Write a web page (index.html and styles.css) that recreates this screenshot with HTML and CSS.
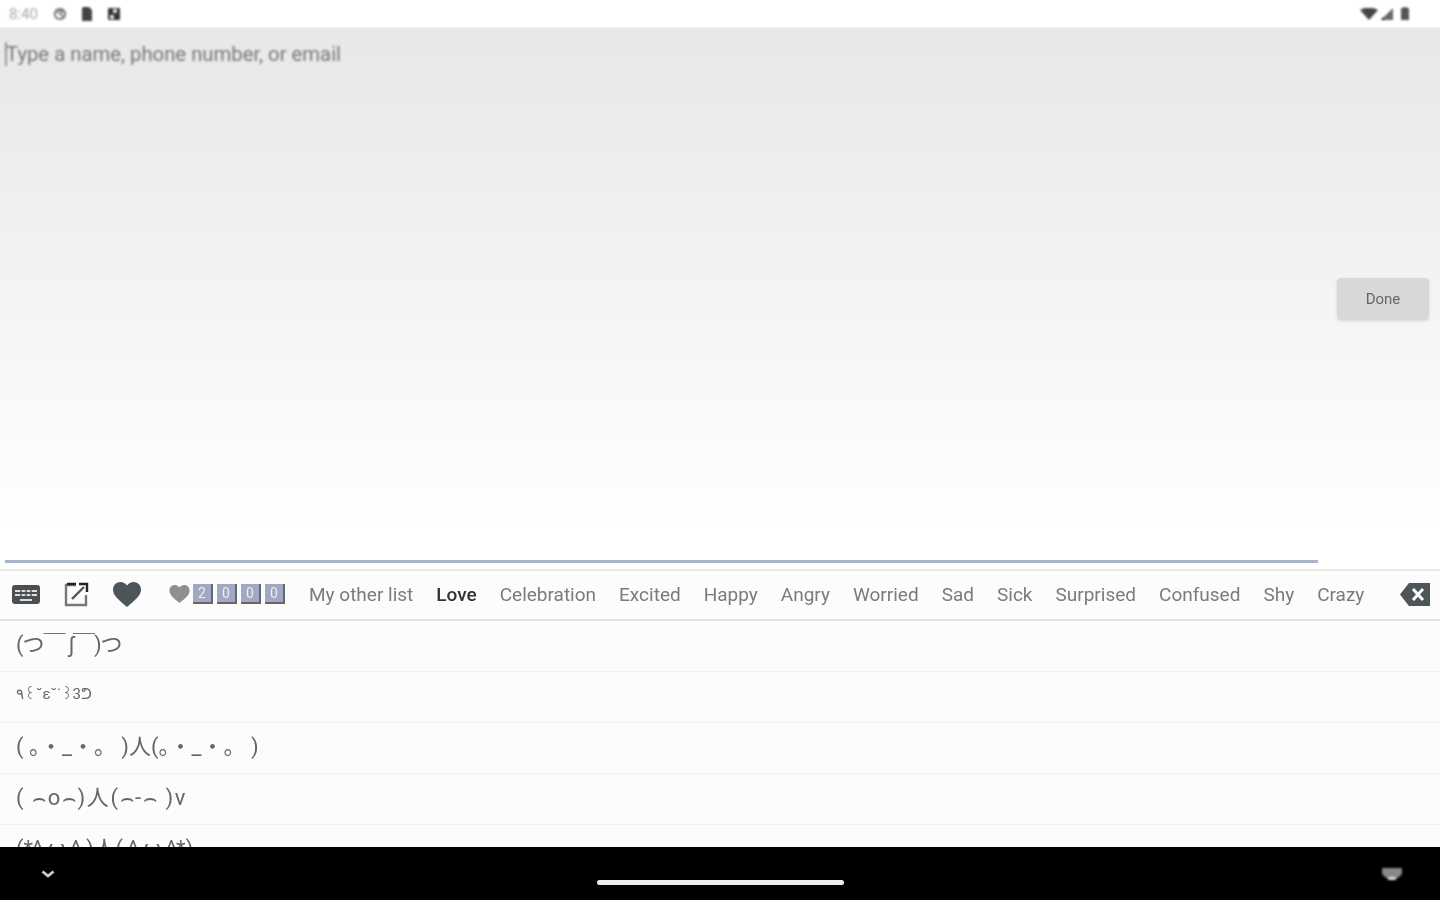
FILE: index.html
```html
<!DOCTYPE html>
<html>
<head>
  <meta charset="utf-8">
  <title>Kaomoji keyboard</title>
  <link rel="stylesheet" href="styles.css">
</head>
<body>
  <div class="status-bar">
    <div class="status-left">
      <span class="time">8:40</span>
      <svg class="st-icon" viewBox="0 0 14 14"><circle cx="7" cy="7" r="5.200" fill="none" stroke="#666" stroke-width="1.800"/><path d="M3 3l8 8M6 4h3v3" fill="none" stroke="#666" stroke-width="1.300"/></svg>
      <svg class="st-icon" viewBox="0 0 14 14"><path d="M3 0h6l3 3v11H2V1z" fill="#444"/></svg>
      <svg class="st-icon" viewBox="0 0 14 14"><rect x="1" y="1" width="12" height="12" rx="1" fill="#333"/><path d="M6 2h4v4H6zM3 8h4v4H3z" fill="#ddd"/></svg>
    </div>
    <div class="status-right">
      <svg class="wifi" viewBox="0 0 18 12"><path d="M0 2q9-5 18 0l-9 10z" fill="#444"/></svg>
      <svg class="signal" viewBox="0 0 12 12"><path d="M12 0v12H0z" fill="#666"/><path d="M0 12l3-3v3z" fill="#000"/></svg>
      <svg class="battery" viewBox="0 0 8 13"><path d="M2.500 0h3v1H8v12H0V1h2.500z" fill="#555"/></svg>
    </div>
  </div>

  <div class="compose">
    <div class="to-field"><span class="caret"></span>Type a name, phone number, or email</div>
    <button class="done">Done</button>
    <div class="input-line"></div>
  </div>

  <div class="toolbar">
    <svg class="ic-keyboard" viewBox="0 0 28 19"><rect width="28" height="19" rx="3" fill="#4a4f52"/><path d="M3 5h22v2H3zM3 9h22v2H3z" fill="#ddd"/><path d="M9 4v8M14 4v8M19 4v8" stroke="#4a4f52" stroke-width="1.400"/><rect x="8" y="14" width="12" height="2" fill="#ddd"/></svg>
    <svg class="ic-compose" viewBox="0 0 25 25"><path d="M12 3H2v20h20V13" fill="none" stroke="#777" stroke-width="2.400"/><path d="M8 17L20 5" stroke="#555" stroke-width="2.400"/><path d="M3 2h9M15 2h8v8" fill="none" stroke="#222" stroke-width="2.400"/></svg>
    <svg class="ic-heart" viewBox="0 0 28 25"><path d="M14 25C6 18 0 14 0 7.500C0 3 3.500 0 7.500 0C10 0 12.500 1.200 14 3.500C15.500 1.200 18 0 20.500 0C24.500 0 28 3 28 7.500C28 14 22 18 14 25z" fill="#4d5558"/></svg>
    <svg class="ic-heart-small" viewBox="0 0 28 25"><path d="M14 25C6 18 0 14 0 7.500C0 3 3.500 0 7.500 0C10 0 12.500 1.200 14 3.500C15.500 1.200 18 0 20.500 0C24.500 0 28 3 28 7.500C28 14 22 18 14 25z" fill="#8f8f8f"/></svg>
    <div class="counter">
      <span class="digit">2</span><span class="digit">0</span><span class="digit">0</span><span class="digit">0</span>
    </div>
    <div class="tabs">
      <span>My other list</span>
      <span class="active">Love</span>
      <span>Celebration</span>
      <span>Excited</span>
      <span>Happy</span>
      <span>Angry</span>
      <span>Worried</span>
      <span>Sad</span>
      <span>Sick</span>
      <span>Surprised</span>
      <span>Confused</span>
      <span>Shy</span>
      <span>Crazy</span>
    </div>
    <svg class="ic-backspace" viewBox="0 0 30 23"><path d="M9 0h21v23H9L0 11.500z" fill="#4d5558"/><path d="M13 6l10 11M23 6L13 17" stroke="#fff" stroke-width="3"/></svg>
  </div>

  <div class="list">
    <div class="row tight">(つ￣ ʃ￣)つ</div>
    <div class="row small">٩꒰˘ε˘˙꒱3ᕤ</div>
    <div class="row">( 。・_・。 )人(。・_・。 )</div>
    <div class="row wide">( ⌢o⌢)人(⌢-⌢ )v</div>
    <div class="row">(*^ ω ^ )人( ^ ω ^*)</div>
  </div>

  <div class="nav-bar">
    <svg class="nav-chevron" viewBox="0 0 14 8"><path d="M1.500 1.500L7 6l5.500-4.500" fill="none" stroke="#ccc" stroke-width="2.800"/></svg>
    <div class="nav-pill"></div>
    <svg class="nav-keyboard" viewBox="0 0 20 12"><path d="M0 0h20v6l-4 4H4L0 6z" fill="#888"/><rect x="6" y="9" width="8" height="3" fill="#ddd"/></svg>
  </div>
</body>
</html>
```

FILE: styles.css
```css
* {
  box-sizing: border-box;
}
html, body {
  margin: 0;
  height: 100%;
}
body {
  width: 1440px;
  height: 900px;
  overflow: hidden;
  display: flex;
  flex-direction: column;
  background: white;
  font-family: Roboto, "Noto Sans CJK JP", sans-serif;
}
.status-bar {
  height: 27px;
  flex: none;
  display: flex;
  justify-content: space-between;
  align-items: center;
  background: white;
  filter: blur(0.8px);
}
.status-left {
  display: flex;
  align-items: center;
  padding-left: 9px;
}
.time {
  width: 44px;
  font-size: 15px;
  color: #aaa;
}
.st-icon {
  width: 14px;
  height: 14px;
  margin-right: 13px;
}
.status-right {
  display: flex;
  align-items: center;
  padding-right: 31px;
}
.wifi {
  width: 18px;
  height: 12px;
  margin-right: 3px;
}
.signal {
  width: 12px;
  height: 12px;
  margin-right: 8px;
}
.battery {
  width: 8px;
  height: 13px;
}
.compose {
  height: 542px;
  flex: none;
  display: flex;
  flex-direction: column;
  background: linear-gradient(#e8e8e8 0%, #ebebeb 15%, #f4f4f4 50%, #fff 92%);
}
.to-field {
  display: flex;
  align-items: center;
  height: 24px;
  margin-top: 15px;
  padding-left: 5px;
  font-size: 20.300px;
  color: #777;
  filter: blur(0.8px);
}
.caret {
  width: 2px;
  height: 24px;
  margin-right: -1px;
  background: #999;
}
.done {
  align-self: flex-end;
  width: 92px;
  height: 42px;
  margin: 212px 11px 0 0;
  border: none;
  border-radius: 4px;
  background: #d8d8d8;
  box-shadow: 0 1px 3px rgba(0,0,0,0.12);
  font-family: Roboto, sans-serif;
  font-size: 15px;
  color: #666;
  filter: blur(0.7px);
}
.input-line {
  width: 1313px;
  height: 3px;
  margin: 240px 0 0 5px;
  background: #a9b4c6;
  filter: blur(0.5px);
}
.toolbar {
  height: 52px;
  flex: none;
  display: flex;
  align-items: center;
  padding: 0 0 2px 12px;
  border-top: 2px solid #e8e8e8;
  border-bottom: 2px solid #e2e2e2;
  background: #fcfcfc;
  filter: blur(0.7px);
}
.ic-keyboard {
  width: 28px;
  height: 19px;
  margin-right: 24px;
}
.ic-compose {
  width: 25px;
  height: 25px;
  margin-right: 24px;
}
.ic-heart {
  width: 28px;
  height: 25px;
  margin-right: 28px;
}
.ic-heart-small {
  width: 21px;
  height: 18px;
  margin-right: 3px;
}
.counter {
  display: flex;
  gap: 4px;
}
.digit {
  width: 20px;
  height: 20px;
  display: flex;
  align-items: center;
  justify-content: center;
  background: #a0a8c2;
  border-right: 2px solid #666;
  border-bottom: 2px solid #666;
  font-size: 14px;
  color: #eee;
}
.tabs {
  display: flex;
  gap: 23px;
  margin-left: 24px;
  font-size: 19px;
  color: #7b7b7b;
  white-space: nowrap;
}
.tabs .active {
  font-weight: 500;
  color: #333;
}
.ic-backspace {
  width: 30px;
  height: 23px;
  margin-left: auto;
  margin-right: 10px;
}
.list {
  height: 226px;
  flex: none;
  overflow: hidden;
  background: #fcfcfc;
}
.row {
  height: 51px;
  padding: 9px 0 0 16px;
  border-bottom: 1px solid #f0f0f0;
  font-size: 22px;
  line-height: 30px;
  color: #666;
  white-space: nowrap;
  filter: blur(0.6px);
}
.row.small {
  padding-top: 7px;
  font-size: 15px;
}
.row.tight {
  letter-spacing: -1px;
}
.row.wide {
  letter-spacing: 1.600px;
}
.nav-bar {
  flex: 1;
  position: relative;
  display: flex;
  align-items: center;
  justify-content: space-between;
  padding: 0 38px 0 41px;
  background: black;
}
.nav-chevron {
  width: 14px;
  height: 8px;
}
.nav-pill {
  position: absolute;
  left: 597px;
  top: 33px;
  width: 247px;
  height: 5px;
  border-radius: 3px;
  background: #eee;
}
.nav-keyboard {
  width: 20px;
  height: 12px;
  filter: blur(0.8px);
}
```
